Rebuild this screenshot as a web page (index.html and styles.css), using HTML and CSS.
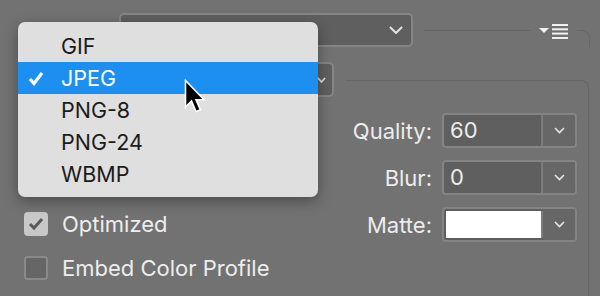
FILE: index.html
```html
<!DOCTYPE html>
<html lang="en">
<head>
  <meta charset="UTF-8">
  <title>Save for Web - Format</title>
  <link rel="stylesheet" href="styles.css">
</head>
<body>
  <div id="panel">
    <div class="row-top">
      <div class="select wide">
        <span class="select-text"></span>
        <svg class="chev" width="14" height="8" viewBox="0 0 14 8"><path d="M1 1 L7 7 L13 1" /></svg>
      </div>
      <div class="frame-top">
        <div class="panel-menu">
          <svg width="30" height="16" viewBox="0 0 30 16">
            <path class="tri" d="M0 4 H10 L5 9 Z" />
            <rect x="13" y="0" width="16" height="2" />
            <rect x="13" y="4.3" width="16" height="2" />
            <rect x="13" y="8.6" width="16" height="2" />
            <rect x="13" y="13" width="16" height="2" />
          </svg>
        </div>
      </div>
    </div>

    <div class="row-second">
      <div class="select small">
        <svg class="chev small-chev" width="9" height="6" viewBox="0 0 9 6"><path d="M1 1 L4.5 5 L8 1" /></svg>
      </div>
      <div class="frame-mid"></div>
    </div>

    <div class="settings">
      <div class="options">
        <label class="check-row">
          <span class="checkbox checked">
            <svg width="16" height="14" viewBox="0 0 16 14"><path d="M2 7 L6 11 L14 2" /></svg>
          </span>
          Optimized
        </label>
        <label class="check-row">
          <span class="checkbox"></span>
          Embed Color Profile
        </label>
      </div>

      <div class="fields">
        <span class="field-label">Quality:</span>
        <div class="combo">
          <span class="combo-value">60</span>
          <span class="combo-btn"><svg width="11" height="7" viewBox="0 0 11 7"><path d="M1 1 L5.5 5.5 L10 1" /></svg></span>
        </div>

        <span class="field-label">Blur:</span>
        <div class="combo">
          <span class="combo-value">0</span>
          <span class="combo-btn"><svg width="11" height="7" viewBox="0 0 11 7"><path d="M1 1 L5.5 5.5 L10 1" /></svg></span>
        </div>

        <span class="field-label">Matte:</span>
        <div class="combo">
          <span class="combo-value swatch"></span>
          <span class="combo-btn"><svg width="11" height="7" viewBox="0 0 11 7"><path d="M1 1 L5.5 5.5 L10 1" /></svg></span>
        </div>
      </div>
    </div>
  </div>

  <div id="format-menu">
    <div class="menu-item">GIF</div>
    <div class="menu-item active">
      <svg class="tick" width="16" height="15" viewBox="0 0 16 15"><path d="M2 8 L6 12.5 L14 2" /></svg>
      JPEG
    </div>
    <div class="menu-item">PNG-8</div>
    <div class="menu-item">PNG-24</div>
    <div class="menu-item">WBMP</div>
  </div>

  <svg id="cursor" width="26" height="38" viewBox="0 0 26 38">
    <path d="M1.5 1.5 V28 L7.5 22 L12 32.5 L16.5 30.8 L12 20.8 H20 Z" />
  </svg>
</body>
</html>
```

FILE: styles.css
```css
body {
  margin: 0;
  padding: 0;
  width: 600px;
  height: 296px;
  overflow: hidden;
  background: #727272;
  font-family: Inter, 'Liberation Sans', sans-serif;
  color: #ececec;
  position: relative;
}

#panel {
  padding-top: 13px;
}

.row-top {
  display: flex;
  padding-left: 119px;
  height: 34px;
}

.select {
  box-sizing: border-box;
  height: 34px;
  background: #5f5f5f;
  border: 2px solid #858585;
  border-radius: 5px;
  display: flex;
  align-items: center;
  padding: 0 8px 0 14px;
}

.select.wide {
  width: 294px;
}

.select-text {
  flex: 1;
}

.chev path {
  fill: none;
  stroke: #e2e2e2;
  stroke-width: 2;
}

.frame-top {
  flex: 1;
  margin: 17px 10px 0 11px;
  border-top: 1px solid #666;
  border-right: 1px solid #666;
  border-top-right-radius: 8px;
  position: relative;
}

.panel-menu {
  position: absolute;
  top: -7px;
  right: 12px;
  padding: 0 8px;
  background: #727272;
  line-height: 0;
}

.panel-menu rect,
.panel-menu .tri {
  fill: #f0f0f0;
}

.row-second {
  display: flex;
  margin-top: 15px;
  height: 35px;
}

.select.small {
  width: 114px;
  height: 35px;
  margin-left: 220px;
  justify-content: flex-end;
  padding-right: 6px;
}

.small-chev path {
  stroke-width: 1.6;
}

.frame-mid {
  flex: 1;
  margin: 18px 11px 0 12px;
  border-top: 1px solid #666;
  border-right: 1px solid #666;
  border-top-right-radius: 8px;
}

.settings {
  display: flex;
  justify-content: space-between;
  margin-right: 11px;
  border-right: 1px solid #666;
  height: 183px;
  padding: 16px 11px 0 24px;
}

.options {
  display: flex;
  flex-direction: column;
  gap: 20px;
  padding-top: 99px;
}

.check-row {
  display: flex;
  align-items: center;
  gap: 14px;
  font-size: 22px;
  height: 24px;
  color: #ededed;
}

.checkbox {
  box-sizing: border-box;
  width: 24px;
  height: 24px;
  border-radius: 4px;
  border: 2px solid #8a8a8a;
  background: #666;
  display: flex;
  align-items: center;
  justify-content: center;
}

.checkbox.checked {
  background: #c8c8c8;
  border-color: #c8c8c8;
}

.checkbox path {
  fill: none;
  stroke: #5a5a5a;
  stroke-width: 3;
}

.fields {
  display: grid;
  grid-template-columns: auto 135px;
  column-gap: 10px;
  row-gap: 12px;
  align-items: center;
  align-self: flex-start;
}

.field-label {
  font-size: 22px;
  text-align: right;
}

.combo {
  box-sizing: border-box;
  height: 35px;
  display: flex;
  border: 2px solid #848484;
  border-radius: 4px;
  background: #5f5f5f;
}

.combo-value {
  flex: 1;
  font-size: 22px;
  line-height: 31px;
  padding-left: 6px;
  border-right: 2px solid #7c7c7c;
}

.combo-value.swatch {
  background: #fff;
  margin: 2px 0 2px 2px;
  padding: 0;
}

.combo-btn {
  width: 32px;
  background: #676767;
  border-radius: 0 3px 3px 0;
  display: flex;
  align-items: center;
  justify-content: center;
}

.combo-btn path {
  fill: none;
  stroke: #e6e6e6;
  stroke-width: 1.6;
}

#format-menu {
  position: absolute;
  left: 18px;
  top: 22px;
  width: 300px;
  height: 175px;
  box-sizing: border-box;
  padding-top: 8px;
  background: #dfdfdf;
  border-radius: 7px;
  box-shadow: 0 4px 14px rgba(0, 0, 0, 0.35);
}

.menu-item {
  position: relative;
  height: 32px;
  line-height: 32px;
  padding-left: 43px;
  font-size: 21.5px;
  color: #1b1b1b;
}

.menu-item.active {
  background: #1c8ff0;
  color: #fff;
}

.tick {
  position: absolute;
  left: 10px;
  top: 9px;
}

.tick path {
  fill: none;
  stroke: #fff;
  stroke-width: 3.2;
}

#cursor {
  position: absolute;
  left: 184px;
  top: 79px;
}

#cursor path {
  fill: #000;
  stroke: #fff;
  stroke-width: 1.6;
  stroke-linejoin: miter;
}
```
